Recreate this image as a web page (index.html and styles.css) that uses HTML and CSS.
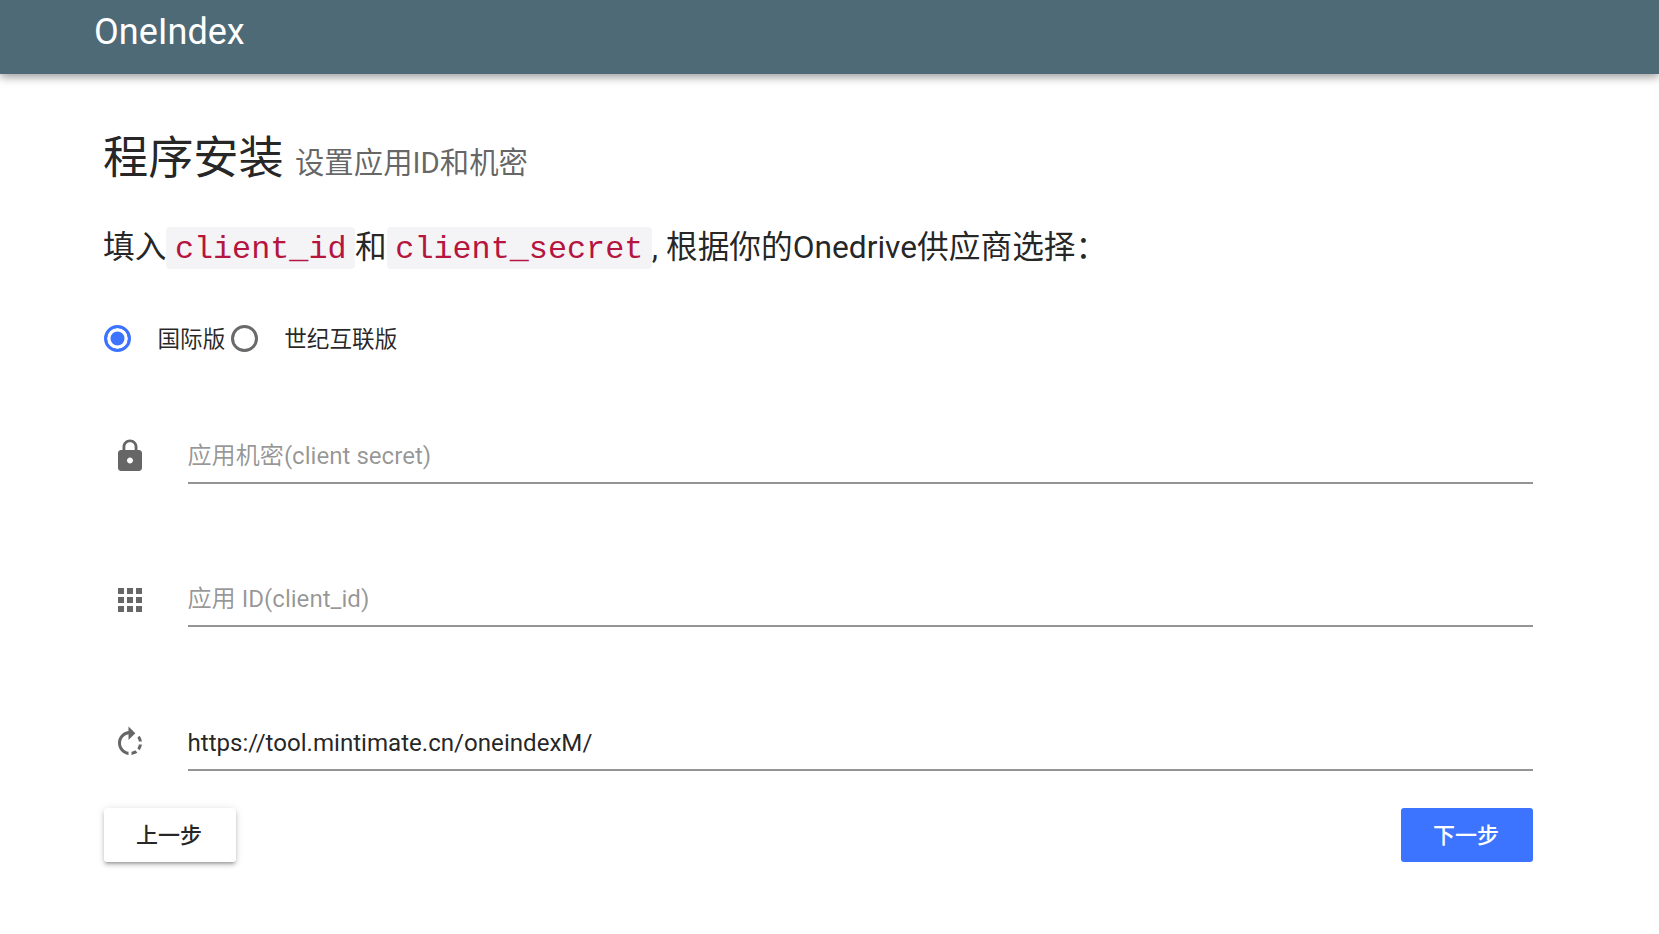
FILE: index.html
```html
<!DOCTYPE html>
<html lang="zh-CN">
<head>
<meta charset="utf-8">
<title>OneIndex</title>
<link rel="stylesheet" href="styles.css">
</head>
<body>
<header class="appbar"><span class="brand">OneIndex</span></header>
<main class="content">
  <h1 class="title">程序安装 <small class="subtitle">设置应用ID和机密</small></h1>
  <p class="intro">填入<code class="code">client_id</code>和<code class="code">client_secret</code>, 根据你的Onedrive供应商选择：</p>
  <div class="radios">
    <label class="radio"><span class="dot dot-on"></span><span class="radio-text">国际版</span></label>
    <label class="radio"><span class="dot"></span><span class="radio-text">世纪互联版</span></label>
  </div>
  <div class="fields">
    <div class="field">
      <svg class="icon" viewBox="0 0 24 24"><path d="M18 8h-1V6c0-2.76-2.24-5-5-5S7 3.24 7 6v2H6c-1.1 0-2 .9-2 2v10c0 1.1.9 2 2 2h12c1.1 0 2-.9 2-2V10c0-1.1-.9-2-2-2zm-6 9c-1.1 0-2-.9-2-2s.9-2 2-2 2 .9 2 2-.9 2-2 2zm3.1-9H8.9V6c0-1.71 1.39-3.1 3.1-3.1 1.71 0 3.1 1.39 3.1 3.1v2z"/></svg>
      <input class="input" type="text" placeholder="应用机密(client secret)">
    </div>
    <div class="field">
      <svg class="icon" viewBox="0 0 24 24"><path d="M4 8h4V4H4v4zm6 12h4v-4h-4v4zm-6 0h4v-4H4v4zm0-6h4v-4H4v4zm6 0h4v-4h-4v4zm6-10v4h4V4h-4zm-6 4h4V4h-4v4zm6 6h4v-4h-4v4zm0 6h4v-4h-4v4z"/></svg>
      <input class="input" type="text" placeholder="应用 ID(client_id)">
    </div>
    <div class="field">
      <svg class="icon" viewBox="0 0 24 24"><path d="M15.55 5.55L11 1v3.07C7.06 4.56 4 7.92 4 12s3.05 7.44 7 7.93v-2.02c-2.84-.48-5-2.94-5-5.91s2.16-5.43 5-5.91V10l4.55-4.45zM19.93 11c-.17-1.39-.72-2.73-1.62-3.89l-1.42 1.42c.54.75.88 1.6 1.02 2.47h2.02zM13 17.9v2.02c1.39-.17 2.74-.71 3.9-1.61l-1.44-1.44c-.75.54-1.59.89-2.46 1.03zm3.89-2.42l1.42 1.41c.9-1.16 1.45-2.5 1.62-3.89h-2.02c-.14.87-.48 1.72-1.02 2.48z"/></svg>
      <input class="input" type="text" value="https://tool.mintimate.cn/oneindexM/">
    </div>
  </div>
  <div class="actions">
    <button class="btn" type="button">上一步</button>
    <button class="btn btn-primary" type="button">下一步</button>
  </div>
</main>
</body>
</html>
```
FILE: styles.css
```css
* { box-sizing: border-box; }
html, body { margin: 0; padding: 0; background: #fff; }
body {
  font-family: Roboto, "Noto Sans CJK SC", sans-serif;
  color: rgba(0, 0, 0, .87);
  height: 934px;
  overflow: hidden;
}
.appbar {
  height: 73.5px;
  background: #4f6a77;
  padding: 8px 0 0 94px;
  box-shadow: 0 3px 9px rgba(0, 0, 0, .4);
}
.brand {
  color: #fff;
  font-size: 36px;
  line-height: 48px;
}
.content {
  padding: 54.5px 126px 0 104px;
}
.title {
  margin: 0 0 0 -1px;
  font-size: 45.2px;
  font-weight: 400;
  line-height: 62px;
  height: 62px;
}
.subtitle {
  font-size: 29.4px;
  color: rgba(0, 0, 0, .62);
  position: relative;
  top: -1px;
}
.intro {
  margin: 37px 0 0 -1px;
  font-size: 31.7px;
  line-height: 42px;
  height: 42px;
  white-space: nowrap;
}
.code {
  font-family: "Liberation Mono", monospace;
  font-size: 31.8px;
  color: #b5153f;
  background: #f4f4f6;
  border-radius: 4px;
  padding: 5px 8.5px 0.5px;
}
.radios {
  display: flex;
  margin-top: 48px;
  height: 42px;
  align-items: center;
}
.radio {
  display: flex;
  align-items: center;
  font-size: 22.6px;
  margin-right: 5.5px;
}
.radio-text {
  color: rgba(0, 0, 0, .85);
  margin-top: -2px;
}
.dot {
  width: 27px;
  height: 27px;
  border-radius: 50%;
  border: 3px solid #6a6a6a;
  margin-right: 26.5px;
}
.dot-on {
  border-color: #3d74ff;
  background: #3d74ff;
  box-shadow: inset 0 0 0 3.5px #fff;
}
.fields {
  margin-top: 67px;
  display: flex;
  flex-direction: column;
  gap: 86px;
}
.field {
  display: flex;
  align-items: center;
  height: 57.5px;
}
.icon {
  width: 36px;
  height: 36px;
  margin: 3px 39.5px 0 8px;
  flex: none;
  fill: #666;
}
.input {
  flex: 1;
  height: 57.5px;
  border: 0;
  border-bottom: 2px solid #949494;
  outline: 0;
  background: transparent;
  padding: 4px 0 0;
  font: 400 24.1px Roboto, "Noto Sans CJK SC", sans-serif;
  color: rgba(0, 0, 0, .87);
}
.input::placeholder { color: rgba(0, 0, 0, .42); opacity: 1; }
.actions {
  margin-top: 37px;
  display: flex;
  justify-content: space-between;
}
.btn {
  width: 132px;
  height: 54px;
  padding: 0 2px 4px 0;
  border: 0;
  border-radius: 3px;
  background: #fff;
  color: rgba(0, 0, 0, .87);
  font: 500 22px Roboto, "Noto Sans CJK SC", sans-serif;
  box-shadow: 0 3px 3px -2px rgba(0,0,0,.25), 0 3px 4px 0 rgba(0,0,0,.16), 0 1px 8px 0 rgba(0,0,0,.12);
}
.btn-primary {
  background: #3d74ff;
  color: #fff;
  box-shadow: none;
}
```
